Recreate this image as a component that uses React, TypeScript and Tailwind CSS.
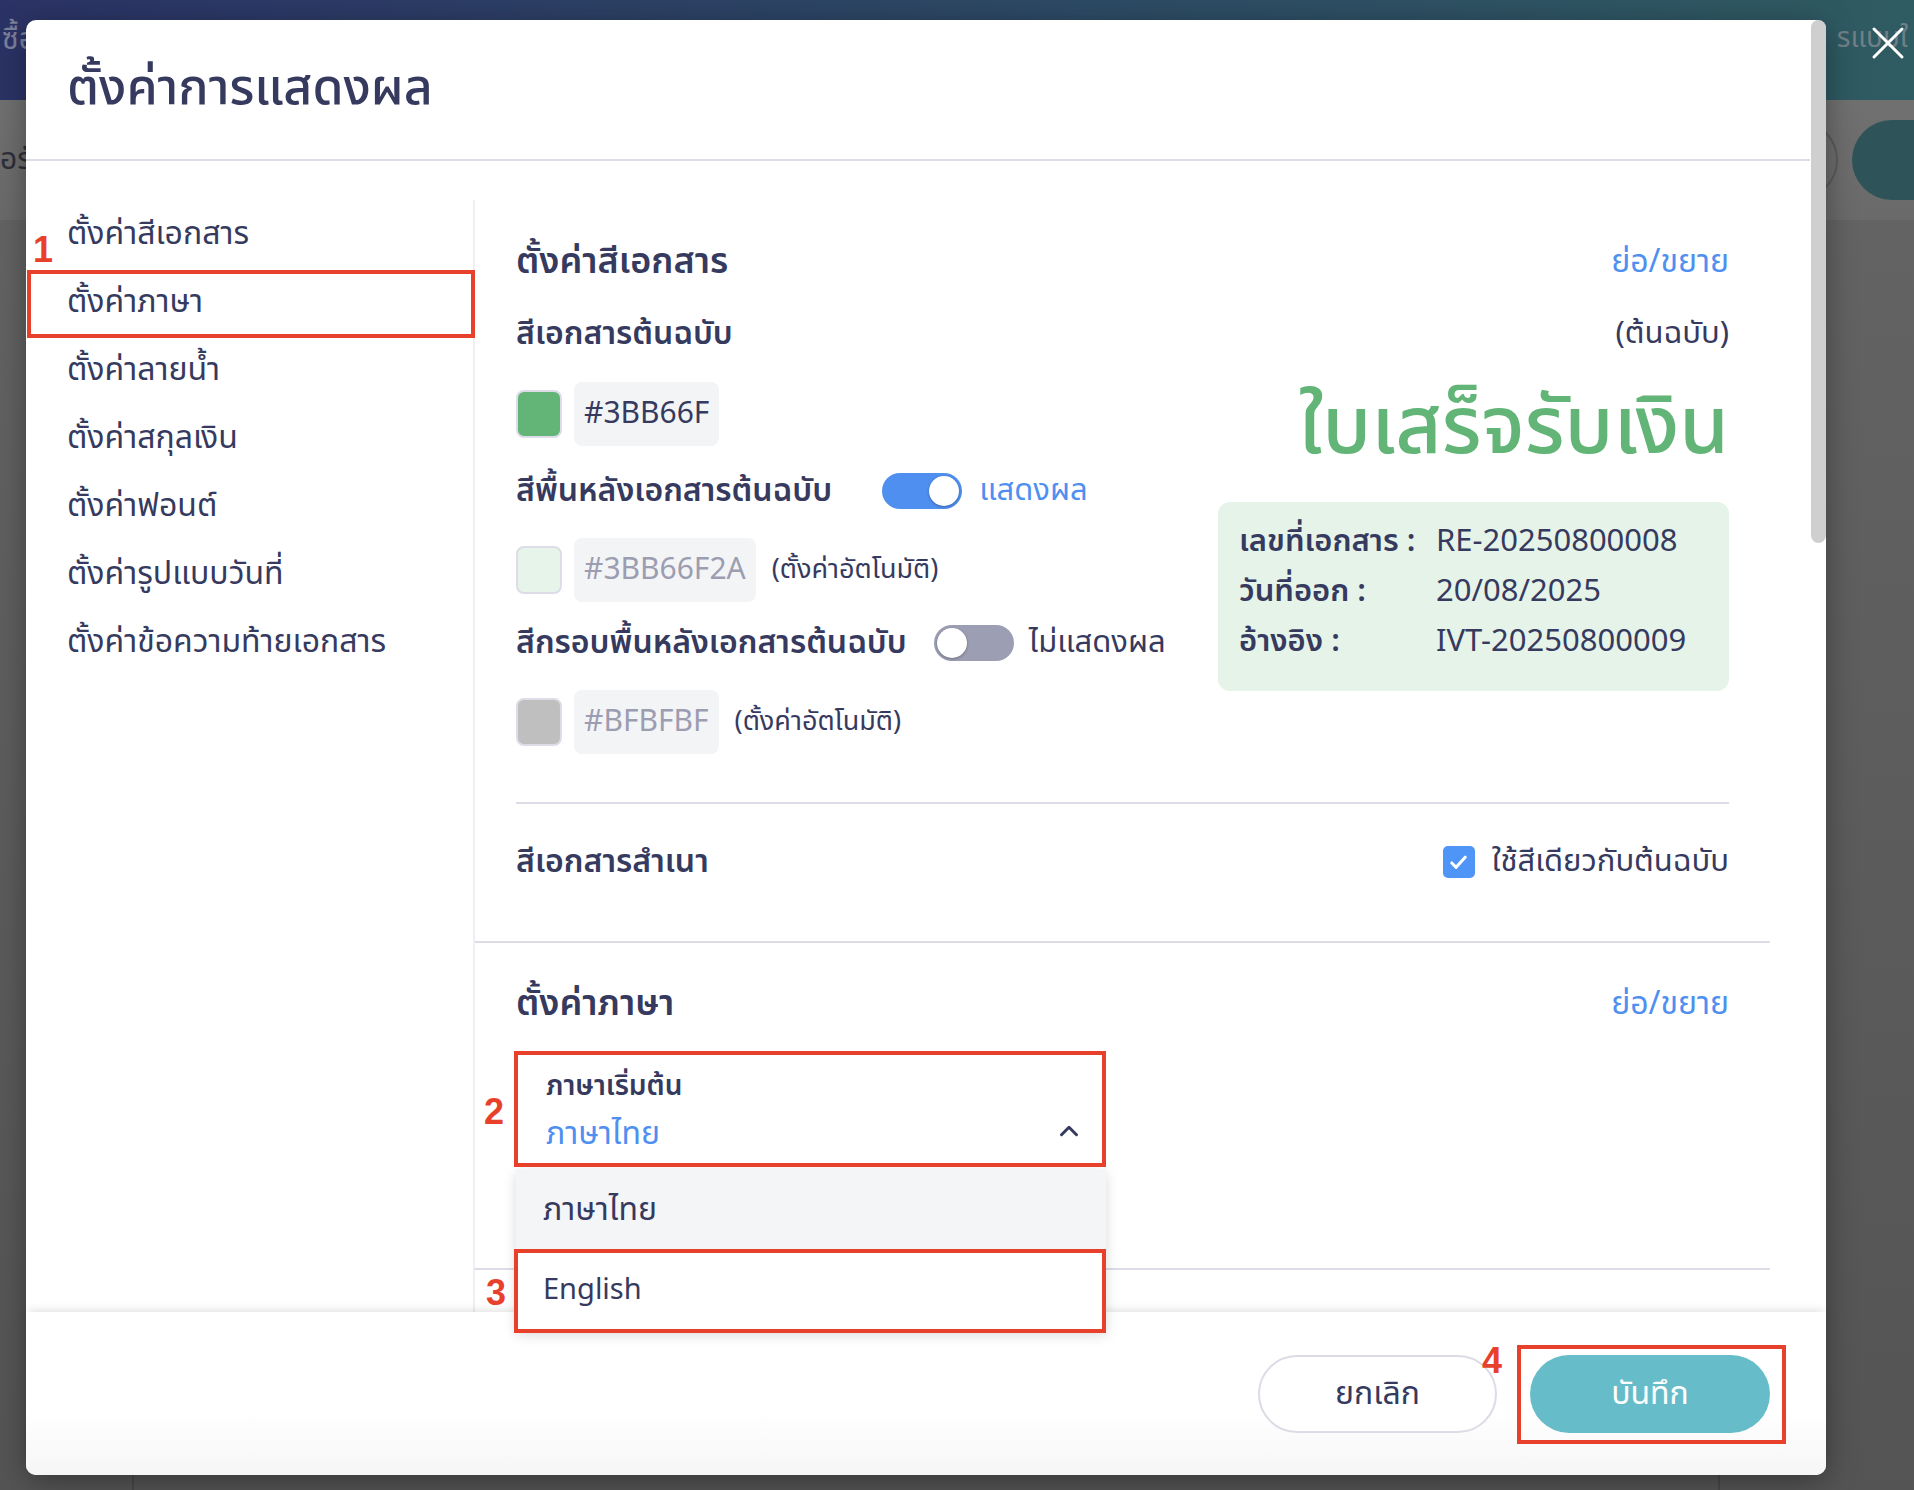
import { ChevronUp } from "lucide-react";

const menu = [
  "ตั้งค่าสีเอกสาร",
  "ตั้งค่าภาษา",
  "ตั้งค่าลายน้ำ",
  "ตั้งค่าสกุลเงิน",
  "ตั้งค่าฟอนต์",
  "ตั้งค่ารูปแบบวันที่",
  "ตั้งค่าข้อความท้ายเอกสาร",
];

function Swatch({ color, hex, muted, note }: { color: string; hex: string; muted?: boolean; note?: string }) {
  return (
    <div className="flex h-[64px] items-center">
      <div className="h-[48px] w-[46px] rounded-[8px] border-2 border-[#dcdde6]" style={{ backgroundColor: color }} />
      <div
        className={`ml-[12px] flex h-[64px] items-center rounded-[8px] bg-[#f3f4f6] px-[10px] text-[30px] ${
          muted ? "text-[#9c9db1]" : "text-[#363a5e]"
        }`}
      >
        {hex}
      </div>
      {note && <span className="ml-[16px] text-[27px] text-[#363a5e]">{note}</span>}
    </div>
  );
}

function Toggle({ on }: { on: boolean }) {
  return (
    <div
      className={`flex h-[36px] w-[80px] items-center rounded-full p-[3px] ${
        on ? "justify-end bg-[#4f8ff0]" : "justify-start bg-[#9c9eb3]"
      }`}
    >
      <div className="h-[30px] w-[30px] rounded-full bg-white shadow-[0_1px_3px_rgba(0,0,0,0.3)]" />
    </div>
  );
}

function Marker({ n, className }: { n: string; className: string }) {
  return (
    <span className={`absolute z-40 font-['Liberation_Sans',sans-serif] text-[36px] font-bold leading-none text-[#e8412b] ${className}`}>
      {n}
    </span>
  );
}

export default function App() {
  return (
    <div className="relative h-[1490px] w-[1914px] overflow-hidden bg-[#565656] font-['Noto_Sans_Thai','Noto_Sans','Liberation_Sans',sans-serif] text-[#363a5e]">
      {/* page behind the overlay */}
      <div className="flex h-[100px] items-start justify-between bg-gradient-to-r from-[#2b3366] to-[#2f5b62] pt-[18px]">
        <span className="pl-[2px] text-[30px] text-[#7d819c]">ซื้อ</span>
        <span className="pr-[6px] text-[28px] text-[#6f7f86]">รแบบใ</span>
      </div>
      <div className="flex h-[120px] items-center justify-between bg-gradient-to-b from-[#707070] to-[#6a6a6a]">
        <span className="text-[30px] text-[#2f2f3a]">อรับ</span>
        <div className="flex items-center">
          <div className="mr-[14px] h-[80px] w-[80px] rounded-full border-2 border-[#5a5a5a]" />
          <div className="h-[80px] w-[62px] rounded-l-full bg-[#2e545a]" />
        </div>
      </div>
      <div className="h-[1270px] bg-gradient-to-b from-[#636363] to-[#545454]">
        <div className="ml-[132px] mr-[194px] h-full border-x-2 border-[#484848]" />
      </div>

      {/* modal */}
      <div className="absolute left-[26px] top-[20px] flex h-[1455px] w-[1800px] flex-col rounded-[10px] bg-white shadow-[0_6px_30px_rgba(0,0,0,0.35)]">
        <div className="flex h-[1292px]">
          <div className="flex w-[1784px] flex-col">
            <header className="flex h-[141px] items-center border-b-2 border-[#dcdbe6] pl-[41px]">
              <h1 className="text-[50px] font-medium text-[#363a5e]">ตั้งค่าการแสดงผล</h1>
            </header>

            <div className="flex flex-1">
              <aside className="w-[449px] pt-[39px]">
                <div className="h-full border-r-2 border-[#efeff3]">
                  {menu.map((m) => (
                    <div key={m} className="flex h-[68px] items-center pl-[41px] text-[32px]">
                      {m}
                    </div>
                  ))}
                </div>
              </aside>

              <main className="flex-1 pr-[40px]">
                {/* colour section */}
                <section className="border-b-2 border-[#dcdbe6] px-[41px] pb-[55px] pt-[79px]">
                  <div className="flex h-[44px] items-center justify-between">
                    <h2 className="text-[36px] font-semibold">ตั้งค่าสีเอกสาร</h2>
                    <span className="text-[32px] text-[#4f8ff0]">ย่อ/ขยาย</span>
                  </div>

                  <div className="mt-[28px] flex justify-between">
                    <div>
                      <div className="flex h-[44px] items-center text-[32px] font-semibold">สีเอกสารต้นฉบับ</div>
                      <div className="mt-[26px]">
                        <Swatch color="#62b576" hex="#3BB66F" />
                      </div>
                      <div className="mt-[21px] flex h-[48px] items-center">
                        <span className="text-[32px] font-semibold">สีพื้นหลังเอกสารต้นฉบับ</span>
                        <div className="ml-[50px]">
                          <Toggle on />
                        </div>
                        <span className="ml-[17px] text-[31px] text-[#4f8ff0]">แสดงผล</span>
                      </div>
                      <div className="mt-[23px]">
                        <Swatch color="#e6f4ea" hex="#3BB66F2A" muted note="(ตั้งค่าอัตโนมัติ)" />
                      </div>
                      <div className="mt-[17px] flex h-[48px] items-center">
                        <span className="text-[32px] font-semibold">สีกรอบพื้นหลังเอกสารต้นฉบับ</span>
                        <div className="ml-[27px]">
                          <Toggle on={false} />
                        </div>
                        <span className="ml-[15px] text-[31px]">ไม่แสดงผล</span>
                      </div>
                      <div className="mt-[23px]">
                        <Swatch color="#bfbfbf" hex="#BFBFBF" muted note="(ตั้งค่าอัตโนมัติ)" />
                      </div>
                    </div>

                    <div className="w-[511px]">
                      <div className="flex h-[44px] items-center justify-end text-[31px]">(ต้นฉบับ)</div>
                      <div className="flex h-[146px] items-center justify-end text-[80px] font-medium leading-none text-[#62b576]">
                        ใบเสร็จรับเงิน
                      </div>
                      <div className="h-[189px] rounded-[12px] bg-[#e5f3e9] px-[21px] pt-[15px] text-[31px]">
                        <div className="flex h-[50px] items-center">
                          <span className="w-[197px] font-semibold">เลขที่เอกสาร :</span>
                          <span>RE-20250800008</span>
                        </div>
                        <div className="flex h-[50px] items-center">
                          <span className="w-[197px] font-semibold">วันที่ออก :</span>
                          <span>20/08/2025</span>
                        </div>
                        <div className="flex h-[50px] items-center">
                          <span className="w-[197px] font-semibold">อ้างอิง :</span>
                          <span>IVT-20250800009</span>
                        </div>
                      </div>
                    </div>
                  </div>

                  <div className="mt-[48px] h-[2px] bg-[#dcdbe6]" />

                  <div className="mt-[34px] flex h-[48px] items-center justify-between">
                    <span className="text-[32px] font-semibold">สีเอกสารสำเนา</span>
                    <div className="flex items-center">
                      <div className="flex h-[32px] w-[32px] items-center justify-center rounded-[5px] bg-[#4f94f7]">
                        <svg viewBox="0 0 24 24" className="h-[23px] w-[23px]" fill="none" stroke="white" strokeWidth="3.2" strokeLinecap="round" strokeLinejoin="round">
                          <path d="M5 12.5l4.5 4.5L19 6.5" />
                        </svg>
                      </div>
                      <span className="ml-[17px] text-[31px]">ใช้สีเดียวกับต้นฉบับ</span>
                    </div>
                  </div>
                </section>

                {/* language section */}
                <section className="border-b-2 border-[#dcdbe6] px-[41px] pb-[100px] pt-[39px]">
                  <div className="flex h-[44px] items-center justify-between">
                    <h2 className="text-[36px] font-semibold">ตั้งค่าภาษา</h2>
                    <span className="text-[32px] text-[#4f8ff0]">ย่อ/ขยาย</span>
                  </div>
                  <div className="relative mt-[26px] h-[116px] w-[590px]">
                    <div className="pl-[30px] pt-[18px]">
                      <div className="text-[28px] font-semibold leading-[34px]">ภาษาเริ่มต้น</div>
                      <div className="mt-[8px] text-[32px] leading-[44px] text-[#4f8ff0]">ภาษาไทย</div>
                    </div>
                    <ChevronUp className="absolute right-[22px] top-[64px] h-[30px] w-[30px] text-[#363a5e]" strokeWidth={2.4} />
                    <div className="absolute left-0 top-[117px] z-30 w-[590px] bg-white shadow-[0_4px_12px_rgba(0,0,0,0.15)]">
                      <div className="flex h-[81px] items-center bg-[#f4f5f7] pl-[27px] text-[32px]">ภาษาไทย</div>
                      <div className="flex h-[81px] items-center pl-[27px] text-[29px]">English</div>
                    </div>
                  </div>
                </section>
              </main>
            </div>
          </div>
          <div className="w-[16px] pl-[1px]">
            <div className="h-[523px] w-[15px] rounded-full bg-[#cfcfcf]" />
          </div>
        </div>

        <footer className="relative z-10 flex h-[163px] items-start justify-end gap-[33px] rounded-b-[10px] bg-gradient-to-b from-white from-60% to-[#f6f6f6] pr-[56px] pt-[43px] shadow-[0_-5px_8px_-3px_rgba(0,0,0,0.12)]">
          <button className="h-[78px] w-[239px] rounded-full border-2 border-[#dcdbe6] bg-white text-[32px] text-[#363a5e]">ยกเลิก</button>
          <button className="h-[78px] w-[240px] rounded-full bg-[#66bdc9] text-[32px] text-white">บันทึก</button>
        </footer>
      </div>

      {/* close button */}
      <svg viewBox="0 0 34 34" className="absolute left-[1871px] top-[26px] h-[34px] w-[34px]" stroke="white" strokeWidth="3" strokeLinecap="round">
        <path d="M3 3L31 31M31 3L3 31" />
      </svg>

      {/* red annotation marks */}
      <div className="absolute left-[27px] top-[270px] z-40 h-[68px] w-[448px] border-4 border-[#e8412b]" />
      <div className="absolute left-[514px] top-[1051px] z-40 h-[116px] w-[592px] border-4 border-[#e8412b]" />
      <div className="absolute left-[514px] top-[1249px] z-40 h-[84px] w-[592px] border-4 border-[#e8412b]" />
      <div className="absolute left-[1517px] top-[1345px] z-40 h-[99px] w-[269px] border-4 border-[#e8412b]" />
      <Marker n="1" className="left-[33px] top-[232px]" />
      <Marker n="2" className="left-[484px] top-[1094px]" />
      <Marker n="3" className="left-[486px] top-[1275px]" />
      <Marker n="4" className="left-[1482px] top-[1343px]" />
    </div>
  );
}
